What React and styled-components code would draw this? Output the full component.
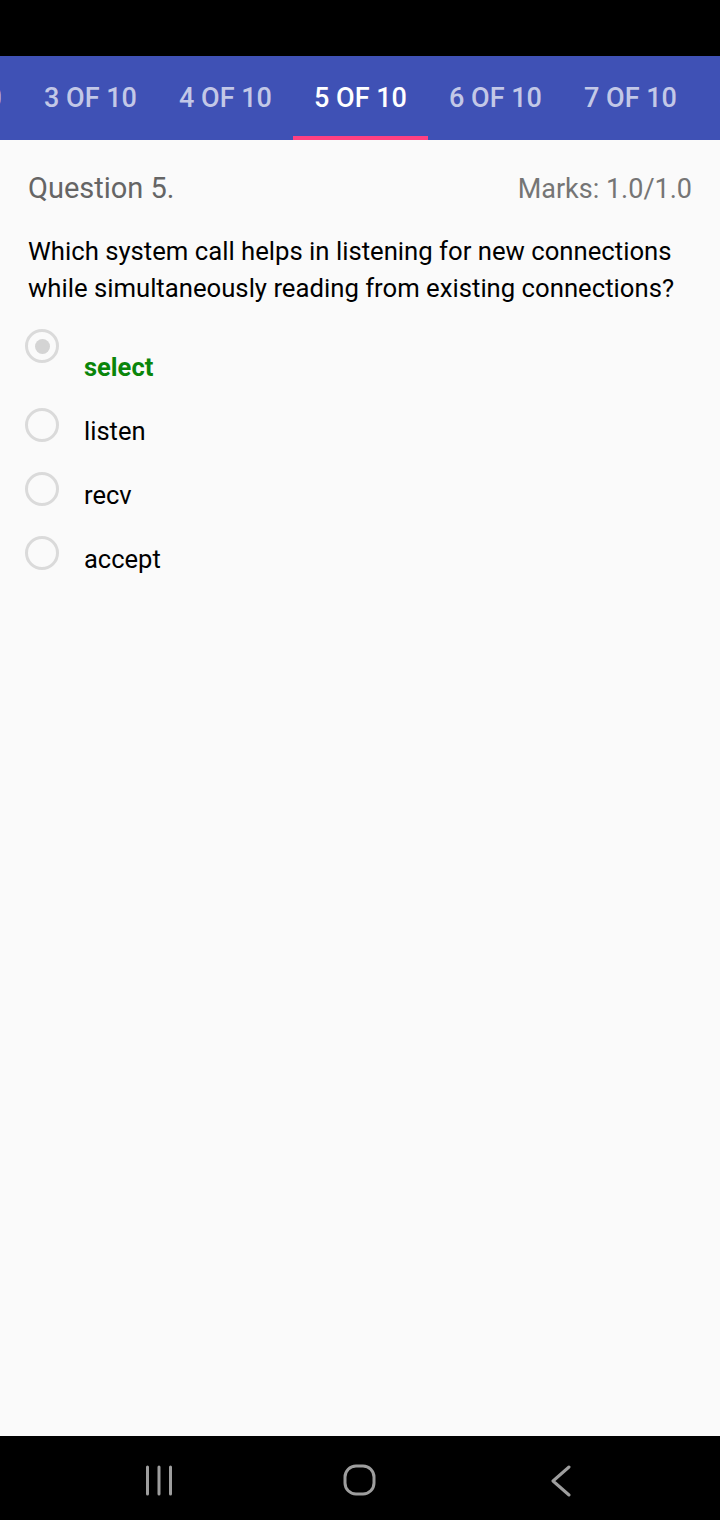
import React from "react";
import styled, { createGlobalStyle } from "styled-components";

const Global = createGlobalStyle`
  html, body { margin: 0; padding: 0; background: #fafafa; }
  body { font-family: Roboto, "Noto Sans", sans-serif; -webkit-font-smoothing: antialiased; }
  * { box-sizing: border-box; }
`;

const Screen = styled.div`
  width: 720px;
  height: 1520px;
  display: flex;
  flex-direction: column;
  overflow: hidden;
  background: #fafafa;
`;

const StatusBar = styled.div`
  height: 56px;
  flex: 0 0 56px;
  background: #000;
`;

const TabBar = styled.div`
  height: 84px;
  flex: 0 0 84px;
  background: #3f51b5;
  overflow: hidden;
  display: flex;
`;

const TabStrip = styled.div`
  display: flex;
  margin-left: -112px;
  height: 100%;
`;

const Tab = styled.div`
  flex: 0 0 135px;
  height: 100%;
  display: flex;
  align-items: center;
  justify-content: center;
  font-family: Roboto, sans-serif;
  font-weight: 500;
  font-size: 27px;
  white-space: nowrap;
  color: ${(p) => (p.$active ? "#ffffff" : "rgba(255,255,255,0.7)")};
  box-shadow: ${(p) => (p.$active ? "inset 0 -4px 0 #ff4081" : "none")};
`;

const Content = styled.div`
  flex: 1;
  padding: 31px 28px 0 28px;
`;

const HeaderRow = styled.div`
  display: flex;
  justify-content: space-between;
  align-items: baseline;
  height: 34px;
`;

const QuestionTitle = styled.div`
  font-size: 29px;
  line-height: 34px;
  color: #656565;
`;

const Marks = styled.div`
  font-size: 27px;
  line-height: 34px;
  color: #757575;
`;

const QuestionText = styled.p`
  margin: 28px 0 0 0;
  font-size: 25.7px;
  line-height: 37px;
  color: #000;
`;

const OptionList = styled.div`
  margin: 7px 0 0 -3px;
  display: flex;
  flex-direction: column;
`;

const OptionRow = styled.div`
  display: flex;
  align-items: flex-start;
  height: ${(p) => (p.$selected ? "79px" : "64px")};
`;

const Radio = styled.div`
  flex: 0 0 34px;
  width: 34px;
  height: 34px;
  margin-top: 15px;
  border-radius: 50%;
  border: 3px solid #dadada;
  display: flex;
  align-items: center;
  justify-content: center;
  &::before {
    content: "";
    display: ${(p) => (p.$selected ? "block" : "none")};
    width: 15px;
    height: 15px;
    border-radius: 50%;
    background: #d4d4d4;
  }
`;

const Label = styled.div`
  margin-left: 25px;
  margin-top: ${(p) => (p.$selected ? "39px" : "24px")};
  font-size: 25.5px;
  line-height: 28px;
  font-weight: ${(p) => (p.$correct ? 700 : 400)};
  color: ${(p) => (p.$correct ? "#0a850a" : "#000")};
`;

const NavBar = styled.div`
  height: 84px;
  flex: 0 0 84px;
  background: #000;
  display: flex;
  justify-content: center;
  align-items: center;
  gap: 141px;
  padding-top: 6px;
`;

const NavItem = styled.div`
  width: 60px;
  height: 40px;
  display: flex;
  align-items: center;
  justify-content: center;
`;

const tabs = ["2 OF 10", "3 OF 10", "4 OF 10", "5 OF 10", "6 OF 10", "7 OF 10", "8 OF 10"];
const options = [
  { text: "select", selected: true, correct: true },
  { text: "listen" },
  { text: "recv" },
  { text: "accept" },
];

export default function App() {
  return (
    <>
      <Global />
      <Screen>
        <StatusBar />
        <TabBar>
          <TabStrip>
            {tabs.map((t) => (
              <Tab key={t} $active={t === "5 OF 10"}>{t}</Tab>
            ))}
          </TabStrip>
        </TabBar>
        <Content>
          <HeaderRow>
            <QuestionTitle>Question 5.</QuestionTitle>
            <Marks>Marks: 1.0/1.0</Marks>
          </HeaderRow>
          <QuestionText>
            Which system call helps in listening for new connections while simultaneously reading from existing connections?
          </QuestionText>
          <OptionList>
            {options.map((o) => (
              <OptionRow key={o.text} $selected={o.selected}>
                <Radio $selected={o.selected} />
                <Label $selected={o.selected} $correct={o.correct}>{o.text}</Label>
              </OptionRow>
            ))}
          </OptionList>
        </Content>
        <NavBar>
          <NavItem>
            <svg width="40" height="32" viewBox="0 0 40 32">
              <g stroke="#9e9e9e" strokeWidth="3" strokeLinecap="round">
                <line x1="8.5" y1="2" x2="8.5" y2="29" />
                <line x1="20" y1="2" x2="20" y2="29" />
                <line x1="31.5" y1="2" x2="31.5" y2="29" />
              </g>
            </svg>
          </NavItem>
          <NavItem>
            <svg width="40" height="34" viewBox="0 0 40 34">
              <rect x="5" y="2" width="29" height="28" rx="11" fill="none" stroke="#9e9e9e" strokeWidth="3" />
            </svg>
          </NavItem>
          <NavItem>
            <svg width="40" height="32" viewBox="0 0 40 32">
              <polyline points="28,2 12,16 28,30" fill="none" stroke="#9e9e9e" strokeWidth="3" strokeLinecap="round" strokeLinejoin="round" />
            </svg>
          </NavItem>
        </NavBar>
      </Screen>
    </>
  );
}
